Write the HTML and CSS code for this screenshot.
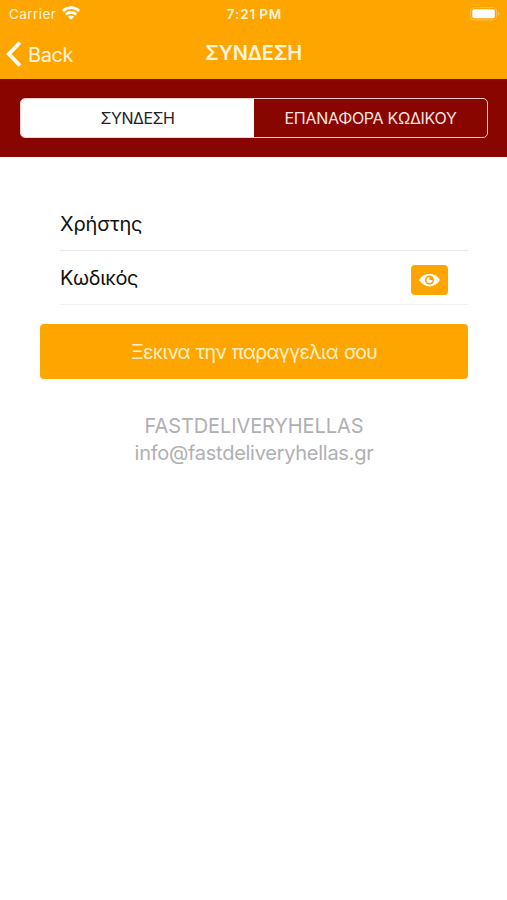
FILE: index.html
```html
<!DOCTYPE html>
<html lang="el">
<head>
<meta charset="utf-8">
<title>ΣΥΝΔΕΣΗ</title>
<link rel="stylesheet" href="styles.css">
</head>
<body>
<header class="top">
  <div class="status">
    <div class="carrier"><span class="carrier-name">Carrier</span>
      <svg class="wifi" viewBox="0 0 18 14"><path d="M.9 5C5.400.500 12.600.500 17.100 5M3.700 8.500c3-2.800 7.600-2.800 10.600 0" fill="none" stroke="#fff" stroke-width="2.600"/><path d="M5.900 10.700c1.900-1.500 4.300-1.500 6.200 0L9 13.800z" fill="#fff"/></svg>
    </div>
    <time class="clock">7:21 PM</time>
    <svg class="battery" viewBox="0 0 30 14"><rect x=".5" y=".5" width="26" height="12.500" rx="3.500" fill="none" stroke="#ffc04d"/><rect x="2.300" y="2.300" width="22.500" height="9" rx="1.800" fill="#fff"/><path d="M28 4.700c1.800.6 1.800 3.400 0 4z" fill="#ffc04d"/></svg>
  </div>
  <nav class="nav">
    <a class="back"><svg class="chevron" viewBox="0 0 16 28"><path d="M14 2.500 2.800 14 14 25.500" fill="none" stroke="#fff" stroke-width="3.800"/></svg><span class="back-label">Back</span></a>
    <h1 class="title">ΣΥΝΔΕΣΗ</h1>
    <span></span>
  </nav>
</header>
<div class="tabs">
  <div class="segment">
    <button class="tab active"><span class="tab-a">ΣΥΝΔΕΣΗ</span></button>
    <button class="tab"><span class="tab-b">ΕΠΑΝΑΦΟΡΑ ΚΩΔΙΚΟΥ</span></button>
  </div>
</div>
<main class="form">
  <div class="field"><span class="user">Χρήστης</span></div>
  <div class="field last"><span class="pass">Κωδικός</span>
    <button class="eye"><svg viewBox="0 0 21 14"><path d="M0 7C5.500-1.500 15.500-1.500 21 7 15.500 15.500 5.500 15.500 0 7z" fill="#fff"/><circle cx="10.500" cy="7" r="4.600" fill="#ffa500"/><path d="M10.500 4a3 3 0 1 0 3 3h-3z" fill="#fff"/></svg></button>
  </div>
  <button class="submit"><span class="submit-label">Ξεκινα την παραγγελια σου</span></button>
  <footer class="contact"><div class="company">FASTDELIVERYHELLAS</div><div class="mail">info@fastdeliveryhellas.gr</div></footer>
</main>
</body>
</html>
```
FILE: styles.css
```css
* { box-sizing: border-box; }
body { margin: 0; background: #fff; font-family: Inter, "Liberation Sans", sans-serif; color: #111; }
button { font: inherit; border: 0; padding: 0; margin: 0; }
svg { display: block; }
.top { height: 79px; background: #ffa500; color: #fff4dc; }
.status { height: 27px; padding: 0 7px 0 9px; display: grid; grid-template-columns: 1fr auto 1fr; align-items: center; font-size: 13.500px; }
.carrier { display: flex; align-items: center; gap: 6px; }
.carrier-name { letter-spacing: .42px; }
.wifi { width: 18px; height: 14px; margin-top: -1px; }
.clock { font-weight: 600; font-size: 13.500px; letter-spacing: .85px; word-spacing: -1px; }
.battery { width: 30px; height: 14px; justify-self: end; }
.nav { height: 52px; padding: 0 6px; display: grid; grid-template-columns: 1fr auto 1fr; align-items: center; }
.back { display: flex; align-items: center; gap: 6px; font-size: 20px; padding-top: 2px; }
.back-label { letter-spacing: -.4px; margin-top: 1px; }
.chevron { width: 16px; height: 28px; }
.title { margin: -1px 0 0; font-size: 20px; font-weight: 600; letter-spacing: -.25px; }
.tabs { height: 78px; background: #880500; padding: 19px 19px 19px 20px; }
.segment { height: 40px; border: 1px solid #f0cfcc; border-radius: 5px; display: flex; overflow: hidden; }
.tab { flex: 1; background: none; color: #ffe3df; font-size: 16px; padding-bottom: 1px; }
.tab-a { letter-spacing: -.5px; }
.tab-b { letter-spacing: -.3px; }
.active { background: #fff; color: #222; }
.form { padding: 40px 39px 0 40px; }
.field { height: 54px; margin-left: 20px; border-bottom: 1px solid #e8e8e8; display: flex; align-items: center; justify-content: space-between; font-size: 20px; }
.last { border-color: #f0f0f0; }
.user { letter-spacing: -.15px; }
.pass { letter-spacing: -.35px; }
.eye { width: 37px; height: 30px; margin: 4px 20px 0 0; border-radius: 4px; background: #ffa500; display: grid; place-items: center; }
.eye svg { width: 21px; height: 14px; }
.submit { width: 100%; height: 55px; margin-top: 19px; border-radius: 4px; background: #ffa500; color: #fff0c8; font-size: 19.500px; }
.submit-label { letter-spacing: -.65px; word-spacing: 1px; }
.contact { margin-top: 34px; text-align: center; color: #b0b0b3; font-size: 20px; line-height: 27px; }
.company { letter-spacing: -.1px; }
.mail { letter-spacing: -.27px; }
```
